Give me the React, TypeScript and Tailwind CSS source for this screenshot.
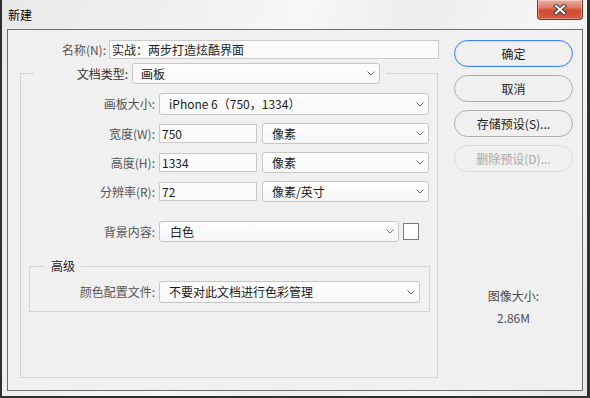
import React from "react";

const Chevron = () => (
  <svg width="8" height="5" viewBox="0 0 8 5" className="shrink-0">
    <path d="M0.5 0.5 L4 4 L7.5 0.5" fill="none" stroke="#6b6b6b" strokeWidth="1" />
  </svg>
);

function Select({ text, className }: { text: string; className: string }) {
  return (
    <div
      className={
        "flex items-center justify-between rounded-[3px] border border-[#c6c6c6] bg-[linear-gradient(#fefefe,#f7f7f7)] pr-[4px] text-[#1b1b1b] " +
        className
      }
    >
      <span className="whitespace-nowrap">{text}</span>
      <Chevron />
    </div>
  );
}

function Field({ text, className }: { text: string; className: string }) {
  return (
    <div
      className={
        "flex items-center border border-[#c9c9c9] bg-[#fbfbfb] pl-[2px] text-[#1b1b1b] " + className
      }
    >
      {text}
    </div>
  );
}

const CloseX = () => (
  <svg width="14" height="11" viewBox="0 0 14 11">
    <path d="M3 2 L11 9 M11 2 L3 9" stroke="#3d3d3d" strokeWidth="4.2" strokeLinecap="square" />
    <path d="M3 2 L11 9 M11 2 L3 9" stroke="#ffffff" strokeWidth="2.2" strokeLinecap="square" />
  </svg>
);

export default function App() {
  return (
    <div className="flex h-[398px] w-[590px] flex-col border-b-2 border-l-2 border-r-[3px] border-[#2f2f2f] bg-[linear-gradient(110deg,#e9e9e9_0%,#f0f0f0_25%,#f7f7f7_42%,#ededed_58%,#f6f6f6_76%,#e8e8e8_100%)] pb-[5px] pl-[5px] pr-[4px] font-['Noto_Sans_CJK_SC','Liberation_Sans',sans-serif] text-[12px] leading-[16px]">
      {/* title bar */}
      <div className="flex h-[29px] shrink-0 items-start">
        <div className="self-center pl-[1px] text-[12px] text-black">新建</div>
        <div className="ml-auto flex h-[20px] w-[46px] items-center justify-center rounded-b-[4px] border border-t-0 border-[#7c3024] bg-[linear-gradient(#eab1a3_0%,#dd7a64_40%,#cf4a30_55%,#d45a3e_100%)] shadow-[inset_0_0_0_1px_rgba(255,255,255,0.35)]">
          <CloseX />
        </div>
      </div>

      {/* client area */}
      <div className="flex flex-1 border border-[#6f6f6f] bg-[#f0f0f0] pt-[10px]">
        {/* left column */}
        <div className="w-[446px] shrink-0">
          <div className="flex items-center">
            <div className="w-[98px] text-right text-[#555]">名称(N):</div>
            <Field text="实战：两步打造炫酷界面" className="ml-[3px] h-[19px] w-[330px]" />
          </div>

          <fieldset className="ml-[12px] mt-[4px] w-[418px] border border-[#d3d3d3] pb-[65px]">
            <legend className="ml-[13px] pr-[6px]">
              <div className="flex items-center">
                <div className="w-[94px] text-right text-[#333]">文档类型:</div>
                <Select text="画板" className="ml-[4px] h-[21px] w-[248px] pl-[8px]" />
              </div>
            </legend>

            <div className="mt-[9px] flex items-center">
              <div className="w-[134px] text-right text-[#555]">画板大小:</div>
              <Select text="iPhone 6（750，1334）" className="ml-[4px] h-[22px] w-[270px] pl-[9px]" />
            </div>

            <div className="mt-[8px] flex h-[21px] items-center">
              <div className="w-[134px] text-right text-[#555]">宽度(W):</div>
              <Field text="750" className="ml-[4px] h-[19px] w-[98px]" />
              <Select text="像素" className="ml-[5px] h-[21px] w-[167px] pl-[9px]" />
            </div>

            <div className="mt-[8px] flex h-[21px] items-center">
              <div className="w-[134px] text-right text-[#555]">高度(H):</div>
              <Field text="1334" className="ml-[4px] h-[19px] w-[98px]" />
              <Select text="像素" className="ml-[5px] h-[21px] w-[167px] pl-[9px]" />
            </div>

            <div className="mt-[8px] flex h-[21px] items-center">
              <div className="w-[134px] text-right text-[#555]">分辨率(R):</div>
              <Field text="72" className="ml-[4px] h-[19px] w-[98px]" />
              <Select text="像素/英寸" className="ml-[5px] h-[21px] w-[167px] pl-[9px]" />
            </div>

            <div className="mt-[19px] flex h-[21px] items-center">
              <div className="w-[134px] text-right text-[#555]">背景内容:</div>
              <Select text="白色" className="ml-[4px] h-[21px] w-[240px] pl-[10px]" />
              <div className="ml-[4px] h-[17px] w-[16px] border border-[#7a7a7a] bg-white" />
            </div>

            <fieldset className="ml-[8px] mt-[16px] w-[401px] border border-[#d3d3d3] pb-[8px]">
              <legend className="ml-[15px] px-[6px] text-[#222]">高级</legend>
              <div className="mt-[7px] flex items-center">
                <div className="w-[125px] text-right text-[#555]">颜色配置文件:</div>
                <Select text="不要对此文档进行色彩管理" className="ml-[4px] h-[22px] w-[261px] pl-[9px]" />
              </div>
            </fieldset>
          </fieldset>
        </div>

        {/* right column */}
        <div className="flex w-[119px] shrink-0 flex-col items-center">
          <button className="h-[27px] w-[119px] rounded-full border border-[#3f82ea] bg-[#f0f0f0] text-[#1b1b1b] shadow-[inset_0_0_0_1px_rgba(120,170,245,0.25)]">
            确定
          </button>
          <button className="mt-[8px] h-[27px] w-[119px] rounded-full border border-[#adadad] bg-[#f0f0f0] text-[#1b1b1b]">
            取消
          </button>
          <button className="mt-[8px] h-[27px] w-[119px] rounded-full border border-[#adadad] bg-[#f0f0f0] text-[#1b1b1b]">
            存储预设(S)...
          </button>
          <button className="mt-[8px] h-[27px] w-[119px] rounded-full border border-[#dadada] bg-[#f0f0f0] text-[#a8a8a8]">
            删除预设(D)...
          </button>
          <div className="mt-[116px] text-[#4a4a4a]">图像大小:</div>
          <div className="mt-[6px] text-[#505050]">2.86M</div>
        </div>
      </div>
    </div>
  );
}
